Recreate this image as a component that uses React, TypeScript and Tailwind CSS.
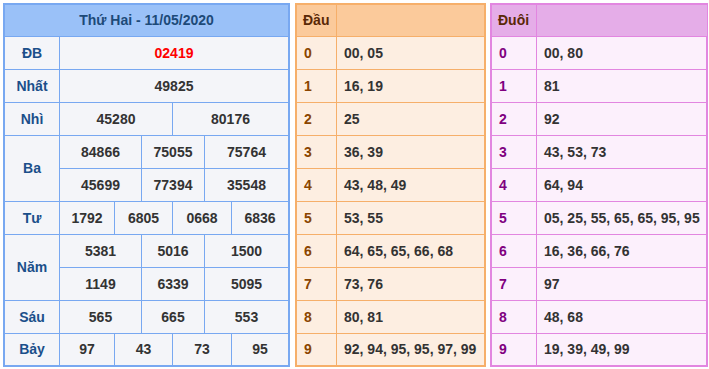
import React from "react";

type Cell = { text: string; span: number; red?: boolean };
type Row = { label?: string; labelRows?: number; cells: Cell[] };

// column tracks: label | 55 | 27 | 31 | 32 | 27 | 56
const RESULT_ROWS: Row[] = [
  { label: "ĐB", cells: [{ text: "02419", span: 6, red: true }] },
  { label: "Nhất", cells: [{ text: "49825", span: 6 }] },
  { label: "Nhì", cells: [{ text: "45280", span: 3 }, { text: "80176", span: 3 }] },
  { label: "Ba", labelRows: 2, cells: [{ text: "84866", span: 2 }, { text: "75055", span: 2 }, { text: "75764", span: 2 }] },
  { cells: [{ text: "45699", span: 2 }, { text: "77394", span: 2 }, { text: "35548", span: 2 }] },
  { label: "Tư", cells: [{ text: "1792", span: 1 }, { text: "6805", span: 2 }, { text: "0668", span: 2 }, { text: "6836", span: 1 }] },
  { label: "Năm", labelRows: 2, cells: [{ text: "5381", span: 2 }, { text: "5016", span: 2 }, { text: "1500", span: 2 }] },
  { cells: [{ text: "1149", span: 2 }, { text: "6339", span: 2 }, { text: "5095", span: 2 }] },
  { label: "Sáu", cells: [{ text: "565", span: 2 }, { text: "665", span: 2 }, { text: "553", span: 2 }] },
  { label: "Bảy", cells: [{ text: "97", span: 1 }, { text: "43", span: 2 }, { text: "73", span: 2 }, { text: "95", span: 1 }] },
];

const DAU: string[] = [
  "00, 05",
  "16, 19",
  "25",
  "36, 39",
  "43, 48, 49",
  "53, 55",
  "64, 65, 65, 66, 68",
  "73, 76",
  "80, 81",
  "92, 94, 95, 95, 97, 99",
];

const DUOI: string[] = [
  "00, 80",
  "81",
  "92",
  "43, 53, 73",
  "64, 94",
  "05, 25, 55, 65, 65, 95, 95",
  "16, 36, 66, 76",
  "97",
  "48, 68",
  "19, 39, 49, 99",
];

const spanClass: Record<number, string> = {
  1: "col-span-1",
  2: "col-span-2",
  3: "col-span-3",
  6: "col-span-6",
};

function ResultTable() {
  let rowIdx = 2;
  return (
    <div className="w-[287px] shrink-0 border-2 border-[#78a8f1] bg-[#f4f5f9]">
      <div className="grid grid-cols-[55px_55px_27px_31px_32px_27px_56px] grid-rows-[32px_repeat(9,33px)_31px]">
        <div className="col-span-7 flex items-center justify-center border-b border-[#78a8f1] bg-[#9ac1f8] text-[#1d4a78]">
          Thứ Hai - 11/05/2020
        </div>
        {RESULT_ROWS.map((row, i) => {
          const r = rowIdx;
          rowIdx += 1;
          const last = i === RESULT_ROWS.length - 1;
          let col = 2;
          return (
            <React.Fragment key={i}>
              {row.label && (
                <div
                  style={{ gridRow: `${r} / span ${row.labelRows ?? 1}`, gridColumn: 1 }}
                  className={`flex items-center justify-center border-r border-[#78a8f1] text-[#1b4f8a] ${
                    last ? "" : "border-b"
                  }`}
                >
                  {row.label}
                </div>
              )}
              {row.cells.map((c, j) => {
                const start = col;
                col += c.span;
                const lastCol = j === row.cells.length - 1;
                return (
                  <div
                    key={j}
                    style={{ gridRow: r, gridColumn: `${start} / span ${c.span}` }}
                    className={`flex items-center justify-center border-[#78a8f1] ${
                      lastCol ? "" : "border-r"
                    } ${last ? "" : "border-b"} ${c.red ? "text-[#ff0000]" : "text-[#333333]"} ${spanClass[c.span]}`}
                  >
                    {c.text}
                  </div>
                );
              })}
            </React.Fragment>
          );
        })}
      </div>
    </div>
  );
}

function HeadTailTable({
  title,
  rows,
  theme,
}: {
  title: string;
  rows: string[];
  theme: "orange" | "pink";
}) {
  const orange = theme === "orange";
  const border = orange ? "border-[#f6af6a]" : "border-[#e286e0]";
  return (
    <div
      className={`shrink-0 border-2 ${border} ${
        orange ? "w-[191px] bg-[#fdeee1]" : "w-[218px] bg-[#fcf0fc]"
      }`}
    >
      <div
        className={`grid grid-rows-[32px_repeat(9,33px)_31px] ${
          orange ? "grid-cols-[40px_1fr]" : "grid-cols-[45px_1fr]"
        }`}
      >
        <div
          className={`flex items-center border-r border-b px-[6px] text-[#5a2806] ${border} ${
            orange ? "bg-[#fbca9b]" : "bg-[#e5ade8]"
          }`}
        >
          {title}
        </div>
        <div className={`border-b ${border} ${orange ? "bg-[#fbca9b]" : "bg-[#e5ade8]"}`} />
        {rows.map((v, i) => {
          const last = i === rows.length - 1;
          return (
            <React.Fragment key={i}>
              <div
                className={`flex items-center border-r px-[7px] ${border} ${last ? "" : "border-b"} ${
                  orange ? "text-[#8a4500]" : "text-[#800080]"
                }`}
              >
                {i}
              </div>
              <div
                className={`flex items-center whitespace-nowrap px-[7px] text-[#333333] ${border} ${
                  last ? "" : "border-b"
                }`}
              >
                {v}
              </div>
            </React.Fragment>
          );
        })}
      </div>
    </div>
  );
}

export default function App() {
  return (
    <div
      className="flex h-[369px] w-[709px] items-start bg-white pl-[3px] pt-[3px] text-[14px] font-bold"
      style={{ fontFamily: '"Liberation Sans", Arial, sans-serif' }}
    >
      <ResultTable />
      <div className="ml-[5px]">
        <HeadTailTable title="Đầu" rows={DAU} theme="orange" />
      </div>
      <div className="ml-[4px]">
        <HeadTailTable title="Đuôi" rows={DUOI} theme="pink" />
      </div>
    </div>
  );
}
